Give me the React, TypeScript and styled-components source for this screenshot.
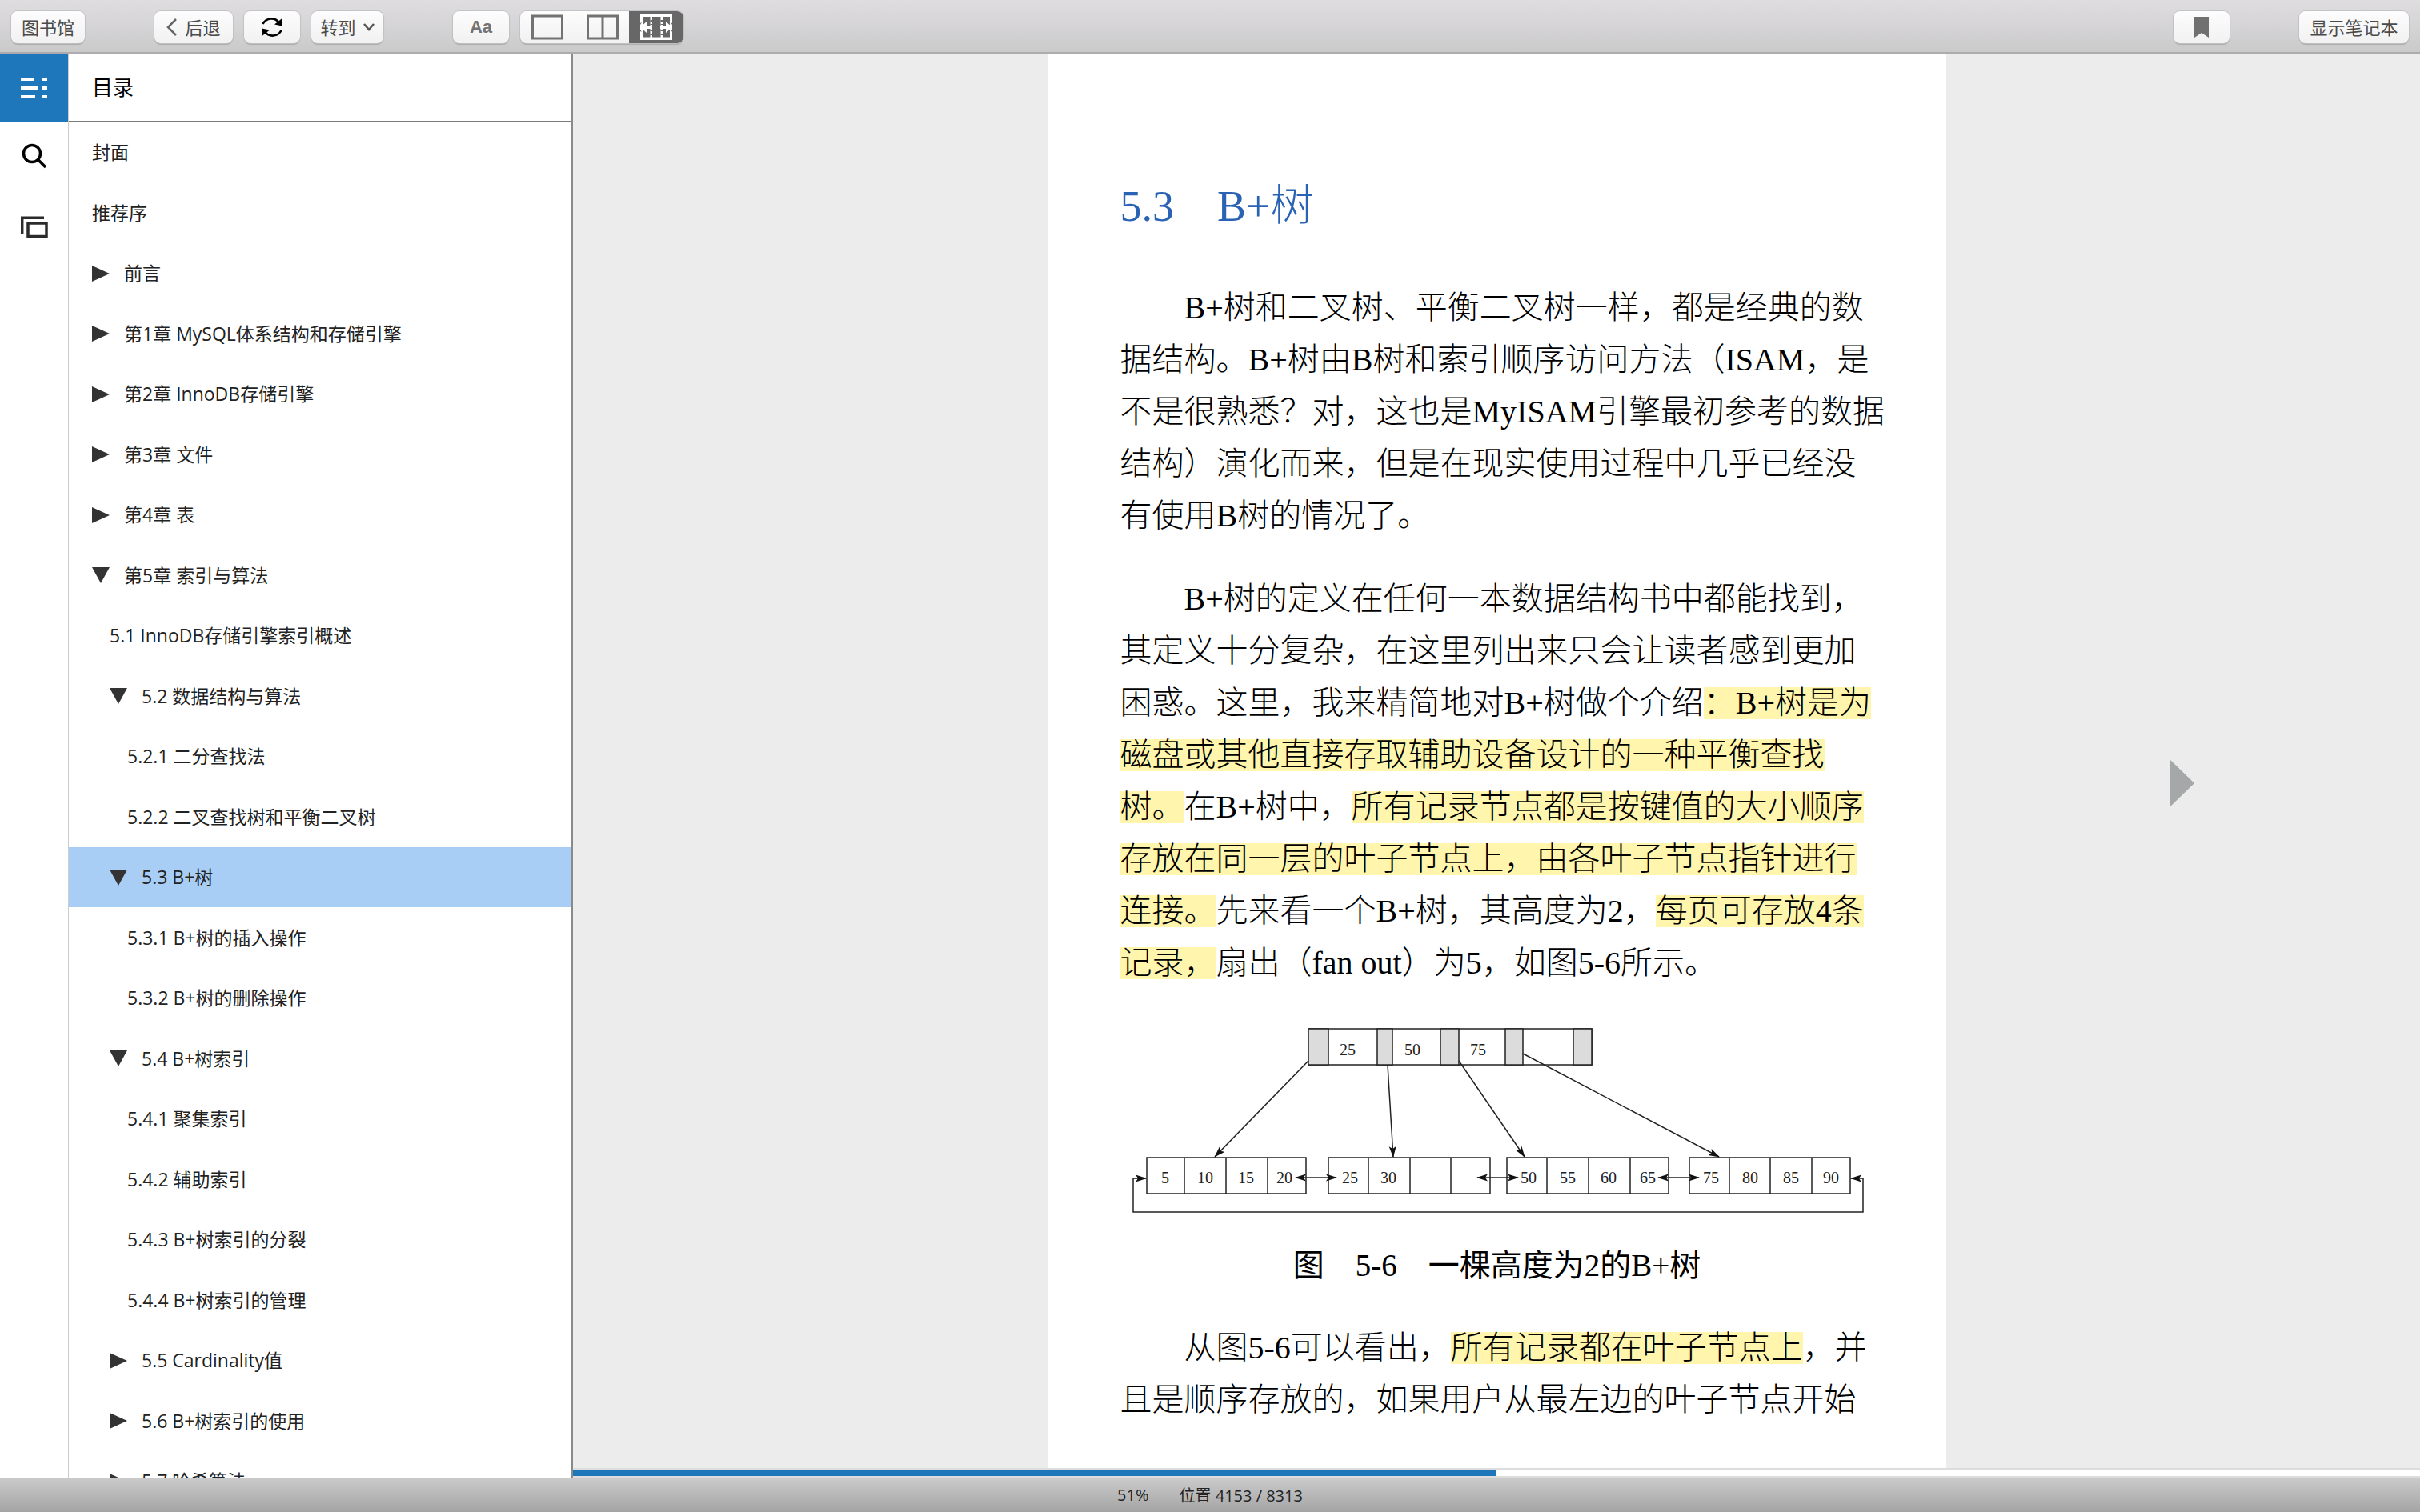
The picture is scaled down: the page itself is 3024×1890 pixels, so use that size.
import styled, { createGlobalStyle } from "styled-components";
import { Fragment } from "react";

const sans = `"Open Sans", "Noto Sans CJK SC", sans-serif`;
const serif = `"Liberation Serif", "Noto Sans CJK SC", serif`;

const Global = createGlobalStyle`
  * { box-sizing: border-box; }
  html, body, #root { height: 100%; margin: 0; }
  body { overflow: hidden; background: #fff; }
  button { font: inherit; color: inherit; border: 0; padding: 0; margin: 0; background: none; cursor: pointer; }
  svg { display: block; flex: none; }
`;

const Shell = styled.div`
  display: flex;
  flex-direction: column;
  height: 100vh;
  font-family: ${sans};
`;

const Toolbar = styled.header`
  flex: none;
  display: flex;
  align-items: center;
  height: 67px;
  padding: 2px 14px 0;
  background: linear-gradient(#dfdde0, #cbcacb);
  border-bottom: 2px solid #adabad;
`;

const ToolGroup = styled.div<{ $gap?: number; $before?: number }>`
  display: flex;
  gap: ${(p) => p.$gap ?? 14}px;
  margin-left: ${(p) => p.$before ?? 0}px;
`;

const ToolButton = styled.button<{ $width: number }>`
  display: flex;
  align-items: center;
  justify-content: center;
  gap: 9px;
  width: ${(p) => p.$width}px;
  height: 40px;
  && {
    border-radius: 8px;
    background: linear-gradient(#fdfdfd, #f1f1f1);
    box-shadow: 0 0 1px 1px #c2c0c2, 0 2px 1px #aaa;
    color: #4b4b4b;
    font-size: 22px;
    line-height: 36px;
  }
`;

const FontLabel = styled.span`
  font-family: "Liberation Sans", sans-serif;
  font-weight: 700;
  color: #737373;
`;

const Segments = styled.div`
  display: flex;
  height: 40px;
  border-radius: 8px;
  overflow: hidden;
  background: linear-gradient(#fdfdfd, #f1f1f1);
  box-shadow: 0 0 1px 1px #c2c0c2, 0 2px 1px #aaa;
`;

const Segment = styled.button<{ $active?: boolean }>`
  display: flex;
  align-items: center;
  justify-content: center;
  width: 68px;
  && {
    background: ${(p) => (p.$active ? "#676767" : "transparent")};
  }
  & + &:not(:last-child) {
    border-left: 1px solid #d5d5d5;
  }
`;

const Spacer = styled.div`
  flex: 1;
`;

const Main = styled.div`
  flex: 1;
  min-height: 0;
  display: flex;
`;

const Rail = styled.nav`
  flex: none;
  width: 86px;
  border-right: 1px solid #ccc;
  display: flex;
  flex-direction: column;
`;

const RailButton = styled.button<{ $active?: boolean }>`
  display: flex;
  align-items: center;
  justify-content: center;
  height: ${(p) => (p.$active ? 86 : 89)}px;
  && {
    padding-bottom: ${(p) => (p.$active ? 0 : 5)}px;
    background: ${(p) => (p.$active ? "#1f77bb" : "#fff")};
  }
`;

const Sidebar = styled.aside`
  flex: none;
  width: 630px;
  display: flex;
  flex-direction: column;
  border-right: 2px solid #8a8a8a;
`;

const SidebarTitle = styled.h2`
  flex: none;
  margin: 0;
  height: 86px;
  padding-left: 29px;
  font-size: 26px;
  line-height: 84px;
  font-weight: 400;
  border-bottom: 2px solid #7b7b7b;
`;

const Contents = styled.ul`
  list-style: none;
  margin: 0;
  padding: 0;
  flex: 1;
  min-height: 0;
  overflow: hidden;
`;

const ContentsItem = styled.li`
  display: flex;
  height: 76px;
  &:nth-child(odd) {
    height: 75px;
  }
`;

const Entry = styled.button<{ $level: number; $selected?: boolean }>`
  display: flex;
  align-items: center;
  gap: 18px;
  width: 100%;
  && {
    padding: 0 0 0 ${(p) => 29 + p.$level * 22}px;
    background: ${(p) => (p.$selected ? "#a9cef6" : "transparent")};
    color: #222;
    font-size: 23px;
    line-height: 75px;
    text-align: left;
    white-space: nowrap;
  }
`;

const Reader = styled.main`
  flex: 1;
  min-width: 0;
  display: flex;
  flex-direction: column;
  background: #ececec;
`;

const Stage = styled.div`
  flex: 1;
  min-height: 0;
  display: grid;
  grid-template-columns: 1fr 1123px 1fr;
`;

const NextArea = styled.div`
  grid-column: 3;
  display: flex;
  align-items: center;
  justify-content: flex-end;
  padding: 55px 282px 0 0;
`;

const Page = styled.article`
  grid-column: 2;
  background: #fff;
  padding: 155px 90px 0 91px;
  overflow: hidden;
  font-family: ${serif};
  font-weight: 300;
  color: #000;
`;

const Heading = styled.h1`
  margin: 0 0 58px;
  font-size: 54px;
  line-height: 72px;
  font-weight: 300;
  color: #2a63b3;
  white-space: pre;
`;

const Paragraph = styled.p`
  margin: 0 0 39px;
  text-indent: 2em;
  font-size: 40px;
  line-height: 65px;
  white-space: nowrap;
`;

const Highlight = styled.mark`
  color: inherit;
  background: linear-gradient(#fff5ac, #fff5ac) center / 100% 40px no-repeat;
  -webkit-box-decoration-break: clone;
  box-decoration-break: clone;
`;

const Figure = styled.figure`
  margin: 0 0 38px;
`;

const Caption = styled.figcaption`
  margin-top: 28px;
  text-align: center;
  font-size: 39px;
  line-height: 65px;
  font-weight: 400;
  white-space: pre;
`;

const Progress = styled.div`
  flex: none;
  height: 12px;
  background: #fff;
  border-top: 2px solid #ddd;
  border-bottom: 2px solid #ddd;
`;

const ProgressFill = styled.div`
  height: 8px;
  background: #1f77bb;
`;

const StatusBar = styled.footer`
  flex: none;
  display: flex;
  align-items: center;
  justify-content: center;
  gap: 38px;
  height: 43px;
  font-size: 20px;
  color: #222;
  background: linear-gradient(#cbcbcb, #a4a4a4);
`;

type Item = { title: string; level: number; state?: "open" | "closed"; selected?: boolean };

const items: Item[] = [
  { title: "封面", level: 0 },
  { title: "推荐序", level: 0 },
  { title: "前言", level: 0, state: "closed" },
  { title: "第1章 MySQL体系结构和存储引擎", level: 0, state: "closed" },
  { title: "第2章 InnoDB存储引擎", level: 0, state: "closed" },
  { title: "第3章 文件", level: 0, state: "closed" },
  { title: "第4章 表", level: 0, state: "closed" },
  { title: "第5章 索引与算法", level: 0, state: "open" },
  { title: "5.1 InnoDB存储引擎索引概述", level: 1 },
  { title: "5.2 数据结构与算法", level: 1, state: "open" },
  { title: "5.2.1 二分查找法", level: 2 },
  { title: "5.2.2 二叉查找树和平衡二叉树", level: 2 },
  { title: "5.3 B+树", level: 1, state: "open", selected: true },
  { title: "5.3.1 B+树的插入操作", level: 2 },
  { title: "5.3.2 B+树的删除操作", level: 2 },
  { title: "5.4 B+树索引", level: 1, state: "open" },
  { title: "5.4.1 聚集索引", level: 2 },
  { title: "5.4.2 辅助索引", level: 2 },
  { title: "5.4.3 B+树索引的分裂", level: 2 },
  { title: "5.4.4 B+树索引的管理", level: 2 },
  { title: "5.5 Cardinality值", level: 1, state: "closed" },
  { title: "5.6 B+树索引的使用", level: 1, state: "closed" },
  { title: "5.7 哈希算法", level: 1, state: "closed" },
];

const Disclosure = ({ open }: { open: boolean }) => (
  <svg width="22" height="22" viewBox="0 0 22 22" fill="#333">
    <path d={open ? "M0 1H22L11 21Z" : "M0 1L22 11L0 21Z"} />
  </svg>
);

const leaves = [
  { edges: [53, 100, 152, 204, 252], values: ["5", "10", "15", "20"], at: [76, 126, 177, 225] },
  { edges: [280, 330, 382, 433, 482], values: ["25", "30"], at: [307, 355] },
  { edges: [503, 553, 605, 657, 705], values: ["50", "55", "60", "65"], at: [530, 579, 630, 679] },
  { edges: [731, 781, 832, 884, 932], values: ["75", "80", "85", "90"], at: [758, 807, 858, 908] },
];

const TreeDiagram = () => (
  <svg width="942" height="246" viewBox="20 6 942 246" fontFamily="Liberation Serif, serif" fontSize="20" fontWeight="400" textAnchor="middle" fill="#222">
    <defs>
      <marker id="tip" markerUnits="userSpaceOnUse" markerWidth="14" markerHeight="10" refX="13" refY="5" orient="auto-start-reverse">
        <path d="M0 0.5L14 5L0 9.5L3 5Z" fill="#111" />
      </marker>
    </defs>
    <g stroke="#222" strokeWidth="1.5">
      <rect x="255" y="17" width="354" height="45" fill="#fff" />
      {[[255, 25], [341, 19], [420, 23], [501, 22], [586, 23]].map(([x, w]) => (
        <rect key={x} x={x} y="17" width={w} height="45" fill="#dcdcdc" />
      ))}
      {leaves.map((leaf) => (
        <Fragment key={leaf.edges[0]}>
          <rect x={leaf.edges[0]} y="178" width={leaf.edges[4] - leaf.edges[0]} height="45" fill="none" />
          {leaf.edges.slice(1, 4).map((x) => <path key={x} d={`M${x} 178V223`} />)}
        </Fragment>
      ))}
      <g fill="none">
        <path d="M255 57L138 177" markerEnd="url(#tip)" />
        <path d="M354 62L361 177" markerEnd="url(#tip)" />
        <path d="M443 57L525 177" markerEnd="url(#tip)" />
        <path d="M523 48L768 177" markerEnd="url(#tip)" />
        <path d="M239 203H290" markerStart="url(#tip)" markerEnd="url(#tip)" />
        <path d="M466 203H517" markerStart="url(#tip)" markerEnd="url(#tip)" />
        <path d="M692 203H743" markerStart="url(#tip)" markerEnd="url(#tip)" />
        <path d="M52 204H36V246H948V204H933" markerStart="url(#tip)" markerEnd="url(#tip)" />
      </g>
    </g>
    <text x="304" y="50">25</text>
    <text x="385" y="50">50</text>
    <text x="467" y="50">75</text>
    {leaves.map((leaf) => leaf.values.map((v, i) => <text key={v + i} x={leaf.at[i]} y="210">{v}</text>))}
  </svg>
);

const FitIcon = () => (
  <svg width="40" height="32" viewBox="0 0 40 32">
    <rect width="40" height="32" fill="#fff" />
    <g fill="#676767">
      <path d="M3 3H12.500V28.500H3ZM15 3H25.500V28.500H15ZM28 3H37V28.500H28Z" />
      <path d="M12.500 7H15V9H12.500ZM12.500 12H15V13H12.500ZM12.500 20H15V21H12.500ZM12.500 24H15V26H12.500ZM25.500 7H28V9H25.500ZM25.500 12H28V13H25.500ZM25.500 20H28V21H25.500ZM25.500 24H28V26H25.500ZM0 13V11L2 10ZM0 19V21L2 22ZM40 13V11L38 10ZM40 19V21L38 22Z" />
    </g>
    <path d="M0 16L8 9V14H15V18H8V23ZM40 16L32 9V14H25V18H32V23Z" fill="#fff" />
  </svg>
);

export default function App() {
  return (
    <Shell>
      <Global />
      <Toolbar>
        <ToolButton $width={92}>图书馆</ToolButton>
        <ToolGroup $before={87}>
          <ToolButton $width={98}>
            <svg width="14" height="24" viewBox="0 0 14 24" fill="none" stroke="#666" strokeWidth="2.5"><path d="M12 2L2 12L12 22" /></svg>
            后退
          </ToolButton>
          <ToolButton $width={70} aria-label="刷新">
            <svg width="26" height="26" viewBox="0 0 26 26" fill="none" stroke="#000" strokeWidth="2.6">
              <path d="M1.500 9A12 12 0 0 1 22 7.500M24.500 17A12 12 0 0 1 4 18.500" />
              <path d="M25.500 2V11.500L16 9.500ZM0.500 24V14.500L10 16.500Z" fill="#000" stroke="none" />
            </svg>
          </ToolButton>
          <ToolButton $width={90}>
            转到
            <svg width="14" height="10" viewBox="0 0 14 10" fill="none" stroke="#555" strokeWidth="2.5"><path d="M1 1L7 8L13 1" /></svg>
          </ToolButton>
        </ToolGroup>
        <ToolGroup $before={87}>
          <ToolButton $width={70}><FontLabel>Aa</FontLabel></ToolButton>
          <Segments>
            <Segment aria-label="单栏">
              <svg width="40" height="32" viewBox="0 0 40 32" fill="none" stroke="#707370" strokeWidth="3"><rect x="1.5" y="2" width="37" height="28" /></svg>
            </Segment>
            <Segment aria-label="双栏">
              <svg width="40" height="32" viewBox="0 0 40 32" fill="none" stroke="#707370" strokeWidth="3"><path d="M1.500 2H38.500V30H1.500ZM20 2V30" /></svg>
            </Segment>
            <Segment aria-label="自动" $active>
              <FitIcon />
            </Segment>
          </Segments>
        </ToolGroup>
        <Spacer />
        <ToolGroup $gap={87}>
          <ToolButton $width={70} aria-label="书签">
            <svg width="18" height="26" viewBox="0 0 18 26" fill="#707070"><path d="M0 0H18V26L9 20L0 26Z" /></svg>
          </ToolButton>
          <ToolButton $width={137}>显示笔记本</ToolButton>
        </ToolGroup>
      </Toolbar>
      <Main>
        <Rail>
          <RailButton $active aria-label="目录">
            <svg width="34" height="26" viewBox="0 0 34 26" fill="#fff"><path d="M0 0H17V4H0ZM27 0H33V4H27ZM0 11H22V15H0ZM27 11H33V15H27ZM0 22H18V26H0ZM27 22H33V26H27Z" /></svg>
          </RailButton>
          <RailButton aria-label="搜索">
            <svg width="32" height="32" viewBox="0 0 32 32" fill="none" stroke="#000" strokeWidth="3.5"><circle cx="13" cy="13" r="10.500" /><path d="M20 20L30 30" /></svg>
          </RailButton>
          <RailButton aria-label="卡片">
            <svg width="34" height="28" viewBox="0 0 34 28" fill="none" stroke="#2b2b2b" strokeWidth="3.5"><path d="M1.700 22V2.200H29" /><rect x="9" y="9" width="23" height="16.500" /></svg>
          </RailButton>
        </Rail>
        <Sidebar>
          <SidebarTitle>目录</SidebarTitle>
          <Contents>
            {items.map((it) => (
              <ContentsItem key={it.title}>
                <Entry $level={it.level} $selected={it.selected}>
                  {it.state && <Disclosure open={it.state === "open"} />}
                  {it.title}
                </Entry>
              </ContentsItem>
            ))}
          </Contents>
        </Sidebar>
        <Reader>
          <Stage>
            <Page lang="zh-CN">
              <Heading>5.3　B+树</Heading>
              <Paragraph>
                B+树和二叉树、平衡二叉树一样，都是经典的数<br />
                据结构。B+树由B树和索引顺序访问方法（ISAM，是<br />
                不是很熟悉？对，这也是MyISAM引擎最初参考的数据<br />
                结构）演化而来，但是在现实使用过程中几乎已经没<br />
                有使用B树的情况了。
              </Paragraph>
              <Paragraph>
                B+树的定义在任何一本数据结构书中都能找到，<br />
                其定义十分复杂，在这里列出来只会让读者感到更加<br />
                困惑。这里，我来精简地对B+树做个介绍<Highlight>：B+树是为<br />
                磁盘或其他直接存取辅助设备设计的一种平衡查找<br />
                树。</Highlight>在B+树中，<Highlight>所有记录节点都是按键值的大小顺序<br />
                存放在同一层的叶子节点上，由各叶子节点指针进行<br />
                连接。</Highlight>先来看一个B+树，其高度为2，<Highlight>每页可存放4条<br />
                记录，</Highlight>扇出（fan out）为5，如图5-6所示。
              </Paragraph>
              <Figure>
                <TreeDiagram />
                <Caption>图　5-6　一棵高度为2的B+树</Caption>
              </Figure>
              <Paragraph>
                从图5-6可以看出，<Highlight>所有记录都在叶子节点上</Highlight>，并<br />
                且是顺序存放的，如果用户从最左边的叶子节点开始
              </Paragraph>
            </Page>
            <NextArea>
              <button aria-label="下一页">
                <svg width="30" height="58" viewBox="0 0 30 58" fill="#a5a8a8"><path d="M0 0L30 29L0 58Z" /></svg>
              </button>
            </NextArea>
          </Stage>
          <Progress role="progressbar" aria-label="阅读进度" aria-valuenow={50}>
            <ProgressFill style={{ width: `${(4153 / 8313) * 100}%` }} />
          </Progress>
        </Reader>
      </Main>
      <StatusBar><span>51%</span><span>位置 4153 / 8313</span></StatusBar>
    </Shell>
  );
}
